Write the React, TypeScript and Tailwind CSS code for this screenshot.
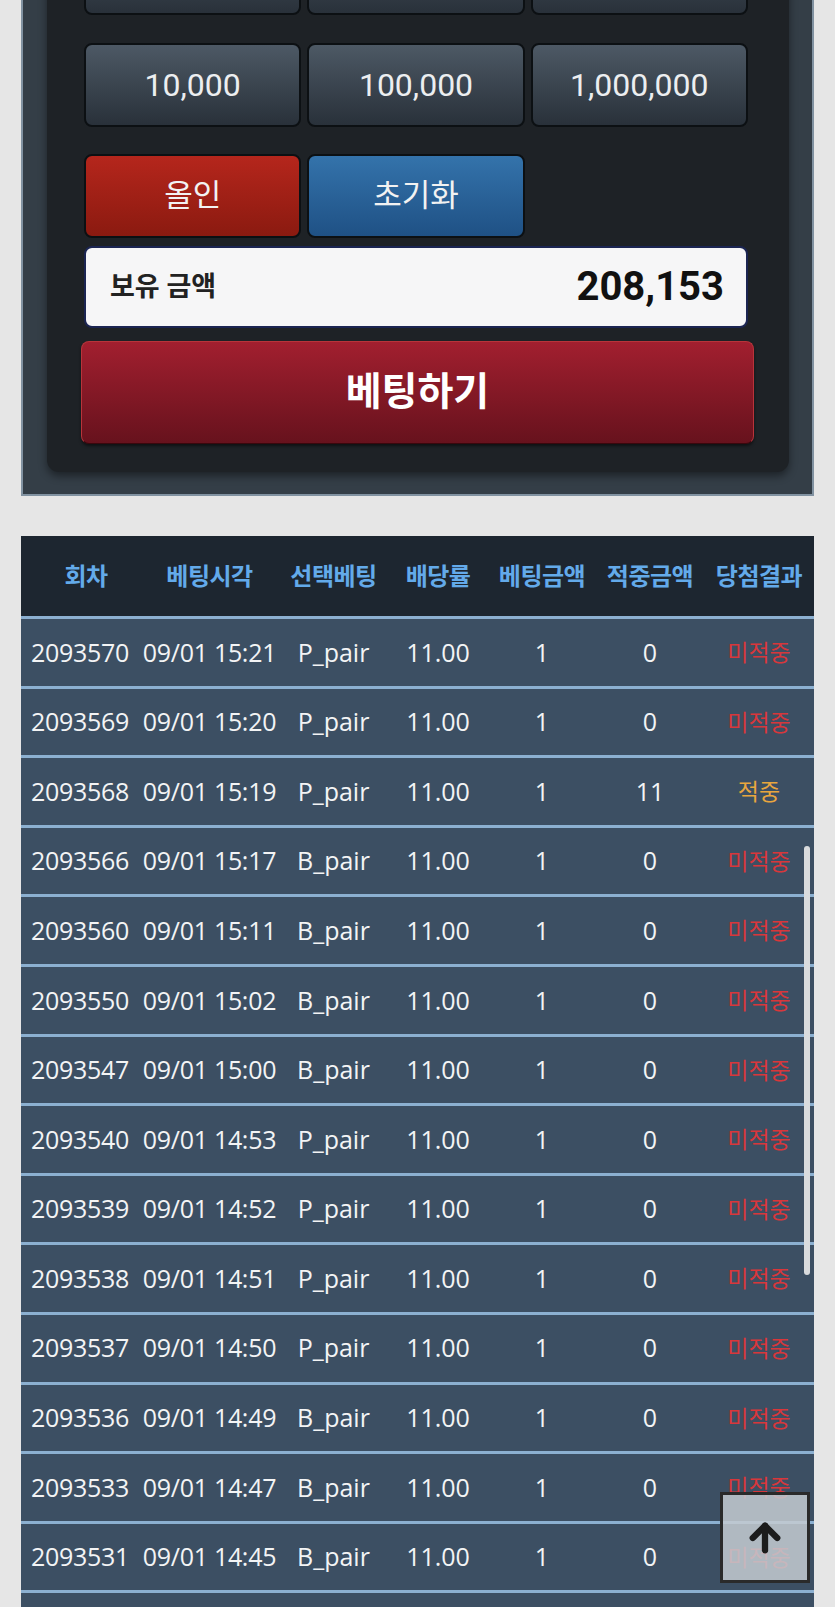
import React from "react";

type Row = { id: string; time: string; pick: string; odds: string; bet: string; win: string; hit: boolean };

const rows: Row[] = [
  { id: "2093570", time: "09/01 15:21", pick: "P_pair", odds: "11.00", bet: "1", win: "0", hit: false },
  { id: "2093569", time: "09/01 15:20", pick: "P_pair", odds: "11.00", bet: "1", win: "0", hit: false },
  { id: "2093568", time: "09/01 15:19", pick: "P_pair", odds: "11.00", bet: "1", win: "11", hit: true },
  { id: "2093566", time: "09/01 15:17", pick: "B_pair", odds: "11.00", bet: "1", win: "0", hit: false },
  { id: "2093560", time: "09/01 15:11", pick: "B_pair", odds: "11.00", bet: "1", win: "0", hit: false },
  { id: "2093550", time: "09/01 15:02", pick: "B_pair", odds: "11.00", bet: "1", win: "0", hit: false },
  { id: "2093547", time: "09/01 15:00", pick: "B_pair", odds: "11.00", bet: "1", win: "0", hit: false },
  { id: "2093540", time: "09/01 14:53", pick: "P_pair", odds: "11.00", bet: "1", win: "0", hit: false },
  { id: "2093539", time: "09/01 14:52", pick: "P_pair", odds: "11.00", bet: "1", win: "0", hit: false },
  { id: "2093538", time: "09/01 14:51", pick: "P_pair", odds: "11.00", bet: "1", win: "0", hit: false },
  { id: "2093537", time: "09/01 14:50", pick: "P_pair", odds: "11.00", bet: "1", win: "0", hit: false },
  { id: "2093536", time: "09/01 14:49", pick: "B_pair", odds: "11.00", bet: "1", win: "0", hit: false },
  { id: "2093533", time: "09/01 14:47", pick: "B_pair", odds: "11.00", bet: "1", win: "0", hit: false },
  { id: "2093531", time: "09/01 14:45", pick: "B_pair", odds: "11.00", bet: "1", win: "0", hit: false },
];

const cols = "grid grid-cols-[118px_141px_107px_102px_106px_110px_108px]";

function ChipButton({ label }: { label?: string }) {
  return (
    <div className="h-[84px] flex items-center justify-center rounded-[8px] border-2 border-[#0c1013] bg-gradient-to-b from-[#4d5965] to-[#29313a] text-[32px] text-[#eceef0]">
      {label}
    </div>
  );
}

export default function App() {
  return (
    <div
      className="relative min-h-screen overflow-hidden bg-[#e6e6e6]"
      style={{ fontFamily: '"Roboto", "Noto Sans CJK KR", sans-serif' }}
    >
      {/* Top betting panel (scrolled: first chip row is mostly above the viewport) */}
      <div className="mx-[21px] mt-[-120px] bg-[#343e47] border-x-2 border-b-2 border-[#8192a1] pl-[24px] pr-[23px] pb-[22px]">
        <div className="rounded-b-[12px] bg-[#1e2226] pt-[51px] pb-[28px] pl-[37px] pr-[41px] shadow-[0_4px_8px_rgba(0,0,0,0.45)]">
          <div className="grid grid-cols-3 gap-x-[6px]">
            <ChipButton />
            <ChipButton />
            <ChipButton />
          </div>
          <div className="mt-[28px] grid grid-cols-3 gap-x-[6px]">
            <ChipButton label="10,000" />
            <ChipButton label="100,000" />
            <ChipButton label="1,000,000" />
          </div>
          <div className="mt-[27px] grid grid-cols-3 gap-x-[6px]">
            <div className="h-[84px] flex items-center justify-center rounded-[8px] border-2 border-[#0c1013] bg-gradient-to-b from-[#b5261c] to-[#8b1a10] text-[31px] text-[#f2f2f2]">
              올인
            </div>
            <div className="h-[84px] flex items-center justify-center rounded-[8px] border-2 border-[#0c1013] bg-gradient-to-b from-[#3473ab] to-[#1f5185] text-[31px] text-[#f2f2f2]">
              초기화
            </div>
            <div />
          </div>
          <div className="mt-[8px] h-[82px] flex items-center justify-between rounded-[8px] border-2 border-[#1b2552] bg-[#f6f6f7] pl-[24px] pr-[22px]">
            <span className="text-[27px] font-bold text-[#222]">보유 금액</span>
            <span className="text-[40px] font-bold text-[#111]">208,153</span>
          </div>
          <div className="mt-[13px] ml-[-3px] mr-[-6px] h-[103px] flex items-center justify-center rounded-[8px] border border-[#b8343a] border-b-[#3a070d] bg-gradient-to-b from-[#a21f2f] to-[#67121d] text-[39px] font-bold text-white shadow-[0_2px_3px_rgba(0,0,0,0.5)]">
            베팅하기
          </div>
        </div>
      </div>

      {/* History table */}
      <div
        className="mx-[21px] mt-[40px]"
        style={{ fontFamily: '"Open Sans", "Noto Sans CJK KR", sans-serif' }}
      >
        <div className={`${cols} h-[80px] items-center bg-[#1d2630] text-[24px] font-bold text-[#63aaea] tracking-[-0.5px]`}>
          <div className="text-center pl-[12px]">회차</div>
          <div className="text-center">베팅시각</div>
          <div className="text-center">선택베팅</div>
          <div className="text-center">배당률</div>
          <div className="text-center">베팅금액</div>
          <div className="text-center">적중금액</div>
          <div className="text-center">당첨결과</div>
        </div>
        {rows.map((r) => (
          <div
            key={r.id}
            className={`${cols} h-[69.6px] items-center border-t-[3px] border-[#8cb0d1] bg-[#3c4f63] text-[25px] text-[#f3f4f5]`}
          >
            <div className="text-center whitespace-nowrap tracking-[-0.3px]">{r.id}</div>
            <div className="text-center whitespace-nowrap tracking-[-0.3px]">{r.time}</div>
            <div className="text-center">{r.pick}</div>
            <div className="text-center">{r.odds}</div>
            <div className="text-center">{r.bet}</div>
            <div className="text-center">{r.win}</div>
            <div className={`text-center text-[23px] ${r.hit ? "text-[#e9a63e]" : "text-[#d8373b]"}`}>
              {r.hit ? "적중" : "미적중"}
            </div>
          </div>
        ))}
        {/* next row, its content lies below the viewport */}
        <div className="h-[69.6px] border-t-[3px] border-[#8cb0d1] bg-[#3c4f63]" />
      </div>

      {/* scrollbar thumb */}
      <div className="absolute left-[804px] top-[846px] h-[429px] w-[6px] rounded-full bg-[#d9dbdd]" />

      {/* scroll to top */}
      <div className="absolute left-[720px] top-[1492px] flex h-[91px] w-[90px] items-center justify-center border-[3px] border-[#2a2a2a] bg-[rgba(196,203,209,0.86)]">
        <svg width="42" height="42" viewBox="0 0 24 24" fill="none" stroke="#1c1c1c" strokeWidth="3.6" strokeLinecap="round" strokeLinejoin="round">
          <path d="M5 12l7-7 7 7" />
          <path d="M12 19V5" />
        </svg>
      </div>
    </div>
  );
}
